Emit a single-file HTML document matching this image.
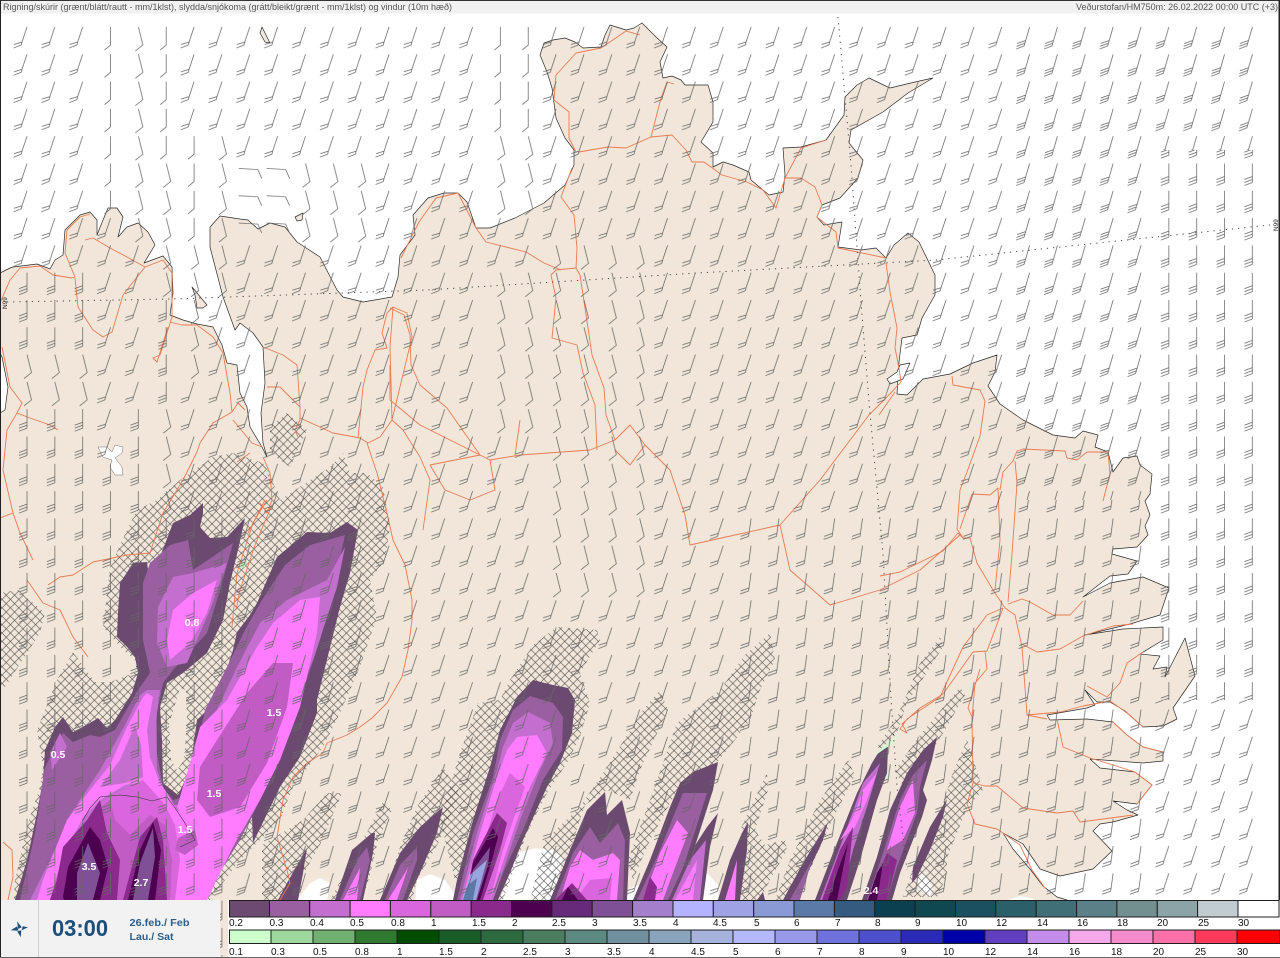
<!DOCTYPE html>
<html lang="is"><head><meta charset="utf-8"><title>Veðurstofan HM750m</title>
<style>html,body{margin:0;padding:0;background:#fff}svg{display:block}text{font-family:"Liberation Sans",sans-serif}</style></head>
<body>
<svg xmlns="http://www.w3.org/2000/svg" width="1280" height="958" viewBox="0 0 1280 958">
<defs>
<pattern id="h" width="8.4" height="8.4" patternUnits="userSpaceOnUse" patternTransform="translate(2 3)"><path d="M-1 -1L9.4 9.4M-1 9.4L9.4 -1" stroke="#444" stroke-width=".6" fill="none"/></pattern>
<pattern id="a" x="13" y="25" width="27.85" height="27.3" patternUnits="userSpaceOnUse"><path d="M14 2L9 17L8.3 20M9 17L1 19.5M8.3 20L.5 23" fill="none" stroke="#666" stroke-width=".75"/></pattern>
<pattern id="a3" x="13" y="25" width="27.85" height="27.3" patternUnits="userSpaceOnUse"><path d="M14 2L8.5 21M10 15.5L1.5 18.5M9.2 18.2L1 21.2M8.5 21L.5 24" fill="none" stroke="#666" stroke-width=".75"/></pattern>
<pattern id="e" x="13" y="25" width="27.85" height="27.3" patternUnits="userSpaceOnUse"><path d="M14 2L11.5 20M11.8 17L3.5 20M11.5 20L3 23" fill="none" stroke="#666" stroke-width=".75"/></pattern>
<pattern id="b" x="13" y="25" width="27.85" height="27.3" patternUnits="userSpaceOnUse"><path d="M14 2V20L8 25" fill="none" stroke="#666" stroke-width=".75"/></pattern>
<pattern id="b3" x="13" y="25" width="27.85" height="27.3" patternUnits="userSpaceOnUse"><path d="M14 2V21M14 15L6 18M14 18L6 21M14 21L6 24" fill="none" stroke="#666" stroke-width=".75"/></pattern>
<pattern id="c" x="13" y="25" width="27.85" height="27.3" patternUnits="userSpaceOnUse"><path d="M14 2L18.5 20L11 26" fill="none" stroke="#666" stroke-width=".75"/></pattern>
<pattern id="d" x="13" y="25" width="27.85" height="27.3" patternUnits="userSpaceOnUse"><path d="M3 7L22 8L26 17" fill="none" stroke="#666" stroke-width=".75"/></pattern>
</defs>

<rect width="1280" height="958" fill="#fff"/>

<!-- land -->
<g fill="#f1e6d9" stroke="#2a2a2a" stroke-width=".7" stroke-linejoin="round">
<path d="M0 273L10 268L13 267L37 264L50 269L55 260L63 255L65 230L80 215L90 212L97 220L97 235L103 220L108 208L117 208L123 217L118 237L127 227L138 223L148 232L155 245L144 263L163 256L172 267L173 293L170 315L183 320L197 324L213 327L222 345L227 363L237 365L240 393L247 407L250 427L262 447L267 457L263 443L261 413L265 383L263 347L253 333L240 323L235 330L223 297L210 247L210 227L220 216L240 219L248 220L258 229L270 223L285 227L297 242L320 257L337 290L343 297L363 302L392 297L398 277L400 255L415 235L413 215L428 198L444 193L458 193L467 202L476 228L490 228L515 218L544 203L565 185L574 165L574 150L565 138L556 118L552 88L547 72L540 55L544 43L553 40L565 38L575 42L583 48L601 47L605 35L610 25L626 30L634 28L642 23L656 37L667 47L660 62L663 78L672 76L681 80L685 85L708 85L713 102L713 122L701 142L713 153L713 167L723 162L733 165L749 172L751 180L769 195L783 192L785 175L783 148L801 147L826 140L844 115L845 97L857 85L869 78L890 88L915 82L933 78L908 93L883 112L851 130L849 143L863 160L858 178L840 198L822 205L817 217L824 225L842 222L838 247L861 250L876 248L886 258L894 245L908 233L919 242L935 275L935 295L922 318L917 335L902 338L899 362L897 394L907 395L923 379L950 374L973 363L997 355L995 372L988 386L1000 404L1023 420L1053 435L1075 438L1083 431L1098 435L1095 447L1108 452L1113 472L1123 458L1137 456L1140 465L1152 474L1150 494L1145 501L1150 515L1145 526L1148 535L1137 547L1113 549L1112 554L1137 561L1128 574L1110 576L1083 597L1110 583L1143 577L1169 588L1160 615L1130 624L1085 635L1123 629L1163 627L1163 640L1140 654L1160 656L1153 669L1167 667L1165 677L1185 638L1195 676L1173 708L1177 719L1163 726L1143 727L1125 711L1110 702L1097 702L1085 690L1095 705L1087 708L1047 715L1050 720L1087 719L1113 722L1127 735L1143 747L1163 752L1163 761L1143 763L1090 759L1100 768L1135 772L1152 785L1137 804L1113 801L1127 810L1138 815L1113 822L1100 824L1093 831L1112 851L1093 869L1060 876L1040 869L1023 844L1003 833L1013 849L1030 869L1043 886L1057 897L1067 900L1067 958L0 958L0 413L5 410L8 387L2 357L0 353Z"/>
<path d="M262 27L270 43L265 42L260 33Z"/>
<path d="M295 217L303 213L302 220L297 221Z"/>
<path d="M192 287L207 305L203 308L197 308L195 295Z"/>
<path d="M887 379L897 372L900 365L910 363L903 379L890 384Z" fill="#fff"/>
<path d="M98 447L107 447L112 452L115 445L123 447L122 453L115 458L122 467L123 475L115 475L110 467L112 460L103 457Z" fill="#fff" stroke="#777" stroke-width=".5"/>
</g>

<!-- white glacier blotches -->
<g fill="#fff">
<path d="M297 900L310 883L320 878L330 883L327 900Z"/>
<path d="M415 900L417 880L430 874L445 880L455 895L458 900Z"/>
<path d="M500 900L517 853L537 848L553 850L563 857L553 900Z"/>
<path d="M690 900L700 875L707 873L720 887L717 900Z"/>
<path d="M625 900L630 888L640 885L645 900Z"/>
<path d="M917 880L923 873L933 887L930 897L920 890Z"/>
<path d="M1008 900L1020 896L1034 899V900Z"/>
</g>

<!-- hatch -->
<g fill="url(#h)">
<path d="M233 453L213 457L180 480L157 500L137 510L127 530L110 567L103 627L123 650L135 660L137 672L110 682L95 682L73 652L57 680L37 730L43 767L40 787L28 823L15 880L14 900L210 900L240 860L280 820L293 787L323 747L340 713L360 667L377 617L370 580L385 560L390 527L383 487L367 473L350 473L343 453L330 467L280 500L268 470L263 463Z"/>
<path d="M0 593L18 590L45 613L40 633L27 653L5 687L0 690Z"/>
<path d="M270 427L287 413L307 430L290 467L270 453Z"/>
<path d="M327 793L342 793L320 845L300 880L290 900L262 900L262 845L303 820Z"/>
<path d="M383 802L392 810L378 840L370 875L362 900L330 900L352 860Z"/>
<path d="M443 767L460 793L440 840L417 880L412 900L383 900L400 847L417 807Z"/>
<path d="M478 703L500 700L510 680L533 645L557 627L597 630L600 640L580 673L590 703L580 737L567 763L547 793L527 833L503 900L460 900L440 820L460 753Z"/>
<path d="M660 690L668 710L640 770L630 800L607 790L585 805L570 850L555 900L530 900L545 840L580 807L603 773L643 710Z"/>
<path d="M770 633L775 660L760 690L750 720L735 740L715 765L680 785L650 840L633 880L628 860L650 800L677 723L720 690L745 655Z"/>
<path d="M767 773L768 790L755 830L765 845L785 840L787 850L770 880L760 900L735 900L748 850L740 830Z"/>
<path d="M848 760L855 775L830 825L810 870L795 900L775 900L790 860L820 800Z"/>
<path d="M940 637L943 647L920 683L907 703L897 733L883 750L877 747L897 717L920 663Z"/>
<path d="M960 687L965 695L945 730L925 762L905 790L895 770L920 735Z"/>
<path d="M967 740L983 790L967 808L947 858L947 876L937 897L903 897L913 868L937 822L953 772Z"/>
</g>
<path d="M180 688L186 690L187 720L184 760L177 770L171 760L169 725Z" fill="#f1e6d9"/>

<!-- precipitation west complex -->
<g stroke="none">
<path fill="#6b4a70" d="M15 900L27 860L37 813L43 780L45 750L55 727L63 717L73 732L90 723L98 718L107 728L115 720L132 693L138 673L135 657L128 648L117 637L118 613L120 583L133 563L147 562L148 570L160 557L173 523L190 515L203 503L203 513L200 527L210 538L227 537L245 518L238 550L230 583L223 620L207 653L183 673L167 683L160 707L162 740L163 783L178 795L190 770L197 720L217 700L233 650L237 632L250 615L257 603L277 557L307 532L330 533L347 522L358 530L350 573L340 607L317 700L317 713L300 757L280 787L253 843L252 817L233 850L220 870L203 897L200 900Z"/>
<path fill="#9a5fa0" d="M20 900L35 833L45 767L63 733L73 742L90 735L100 737L115 730L138 690L150 673L143 640L143 583L150 563L170 545L188 540L193 570L233 543L220 590L207 633L173 670L163 683L157 713L157 753L163 787L173 800L183 797L192 770L205 710L228 665L245 630L262 600L285 565L310 545L345 535L335 580L320 640L300 700L285 745L265 790L240 840L215 880L195 900Z"/>
<path fill="#c46fcf" d="M173 577L193 573L227 563L210 610L187 663L167 667L157 643L158 607Z"/>
<path fill="#c46fcf" d="M237 667L260 623L287 600L327 580L345 547L337 587L313 660L290 713L273 773L247 810L220 860L203 900L30 900L50 860L70 815L100 770L125 725L140 695L147 690L160 690L156 720L157 770L170 805L185 805L195 775L210 725Z"/>
<path fill="#c46fcf" d="M60 733L50 753L52 770L67 747Z"/>
<path fill="#ff7bff" d="M173 610L193 593L217 580L207 613L190 643L170 660L167 640Z"/>
<path fill="#ff7bff" d="M320 597L300 600L273 623L257 647L227 700L200 727L190 763L177 807L193 833L187 883L188 900L207 900L233 847L260 800L280 760L300 707L317 633Z"/>
<path fill="#ff7bff" d="M147 693L153 697L147 730L150 757L160 783L167 793L177 810L197 820L193 850L190 900L172 900L175 850L165 815L143 782L125 785L100 800L85 815L65 850L50 900L37 900L43 880L67 820L90 790L110 765L127 727L143 697Z"/>
<path fill="#c46fcf" d="M135 725L120 760L100 787L125 783L143 777L141 745Z"/>
<path fill="#d966dc" d="M143 780L123 790L105 800L85 825L65 850L52 900L175 900L180 860L175 825L165 805Z"/>
<path fill="#c05cc4" d="M293 663L273 663L247 693L217 740L200 767L197 800L210 817L240 807L267 763L287 707Z"/>
<path fill="#c05cc4" d="M178 838L195 830L198 845L185 855L175 850Z"/>
<path fill="#c05cc4" d="M110 800L97 810L75 835L60 865L50 900L170 900L172 860L165 825L150 815L130 835L115 820Z"/>
<path fill="#8a2a8c" d="M100 800L87 820L63 847L57 880L50 900L117 900L120 860L107 833Z"/>
<path fill="#8a2a8c" d="M157 817L140 837L123 900L167 900L163 840Z"/>
<path fill="#4d004f" d="M90 827L68 867L63 897L64 900L100 900L108 867L100 840Z"/>
<path fill="#4d004f" d="M153 822L140 850L128 900L155 900L161 850Z"/>
<path fill="#805097" d="M88 843L77 873L77 900L93 900L100 873Z"/>
<path fill="#805097" d="M153 828L140 863L133 900L148 900L155 857Z"/>
<path d="M83 820L90 808L100 797L120 795L137 797L152 801L167 797L175 808L183 820L195 840L180 847" fill="none" stroke="#333" stroke-width=".6"/>
</g>

<!-- streaks -->
<g stroke="none">
<path fill="#6b4a70" d="M307 848L287 883L278 900L298 900L303 873Z"/>
<path fill="#6b4a70" d="M372 833L375 833L373 853L363 900L335 900L352 850Z"/>
<path fill="#9a5fa0" d="M367 847L370 860L360 900L340 900L357 860Z"/>
<path fill="#ff7bff" d="M360 868L357 900L343 900Z"/>
<path fill="#6b4a70" d="M443 807L437 833L420 873L407 900L380 900L400 853L420 827Z"/>
<path fill="#9a5fa0" d="M417 847L417 860L403 900L385 900L400 865Z"/>
<path fill="#ff7bff" d="M408 868L397 900L388 900Z"/>

<path fill="#6b4a70" d="M533 680L553 685L568 688L575 700L572 733L560 763L547 787L523 840L510 873L498 900L453 900L457 880L473 820L490 767L500 730L517 697Z"/>
<path fill="#9a5fa0" d="M530 696L553 703L563 717L562 750L543 780L523 830L503 873L493 900L457 900L473 833L493 777L500 740L513 710Z"/>
<path fill="#c46fcf" d="M528 712L550 723L553 743L540 770L520 820L493 900L460 900L477 833L497 770L503 747L513 723Z"/>
<path fill="#ff7bff" d="M517 737L537 735L547 753L530 787L517 820L497 880L490 900L462 900L480 833L497 777L507 750Z"/>
<path fill="#d966dc" d="M510 773L525 787L515 815L503 850L490 900L470 900L482 850L497 800Z"/>
<path fill="#8a2a8c" d="M497 813L507 823L500 850L483 900L465 900L473 860Z"/>
<path fill="#4d004f" d="M493 828L498 837L490 867L480 900L467 900L473 863Z"/>
<path fill="#805097" d="M490 847L488 865L477 900L465 900L473 870Z"/>
<path fill="#9aa5e0" d="M487 860L476 900L462 900L470 875Z"/>
<path fill="#5c7aa8" d="M477 878L473 900L463 900L468 885Z"/>

<path fill="#6b4a70" d="M605 792L607 815L622 800L630 833L627 900L550 900L570 850L587 810Z"/>
<path fill="#9a5fa0" d="M600 843L618 823L625 840L623 900L555 900L573 853L590 827Z"/>
<path fill="#ff7bff" d="M580 850L593 860L613 853L620 860L617 900L560 900L570 867Z"/>
<path fill="#d966dc" d="M590 880L612 878L610 900L575 900Z"/>
<path fill="#8a2a8c" d="M572 883L587 900L555 900Z"/>
<path fill="#4d004f" d="M568 887L578 900L562 900Z"/>

<path fill="#6b4a70" d="M693 772L718 762L713 790L697 840L690 860L677 900L633 900L650 860L670 807L680 783Z"/>
<path fill="#9a5fa0" d="M683 793L707 793L693 837L673 900L637 900L657 857Z"/>
<path fill="#ff7bff" d="M677 820L688 833L673 873L663 900L643 900L660 853Z"/>
<path fill="#8a2a8c" d="M650 877L657 887L655 900L643 900Z"/>
<path fill="#6b4a70" d="M718 813L710 847L703 900L668 900L690 853L707 827Z"/>
<path fill="#c46fcf" d="M706 840L700 900L672 900L690 860Z"/>
<path fill="#ff7bff" d="M697 860L693 900L675 900Z"/>
<path fill="#6b4a70" d="M748 822L747 850L740 900L718 900L730 860L742 833Z"/>
<path fill="#ff7bff" d="M737 860L735 900L725 900Z"/>
<path fill="#6b4a70" d="M763 892L765 900L757 900Z"/>
<path fill="#6b4a70" d="M828 822L823 840L803 883L797 900L783 900L803 863Z"/>
<path fill="#9a5fa0" d="M812 860L800 900L790 900Z"/>

<path fill="#6b4a70" d="M888 747L887 773L877 800L860 860L847 900L815 900L833 853L857 793L872 763L880 750Z"/>
<path fill="#c46fcf" d="M880 763L867 807L853 850L840 900L820 900L840 847L863 783Z"/>
<path fill="#ff7bff" d="M877 773L867 800L855 827L840 840L853 817L863 790Z"/>
<path fill="#8a2a8c" d="M853 827L847 887L840 900L822 900L840 850Z"/>
<path fill="#4d004f" d="M848 843L837 900L828 900L838 870Z"/>

<path fill="#6b4a70" d="M937 737L932 760L923 790L927 800L922 817L900 873L892 900L862 900L877 857L890 810L907 773L923 750Z"/>
<path fill="#9a5fa0" d="M927 760L920 787L917 813L897 867L887 900L867 900L883 853L900 800L913 775Z"/>
<path fill="#ff7bff" d="M913 780L915 813L903 840L887 850L900 807Z"/>
<path fill="#8a2a8c" d="M887 853L897 860L887 900L868 900L880 870Z"/>
<path fill="#4d004f" d="M883 863L877 900L868 900L877 873Z"/>
<path fill="#6b4a70" d="M947 799L943 817L930 850L917 877L912 883L913 867L930 827Z"/>
<path fill="#ccffcc" d="M900 732L893 743L873 757L884 746L895 738Z"/>
<path fill="#ccffcc" d="M889 770L888 781L885 778Z"/>
<path fill="#b8f0b8" d="M241 563L247 561L245 567L240 568Z"/>
</g>
<path d="M267 467L268 487" stroke="#b6f5a5" stroke-width="1" fill="none"/>

<!-- roads -->
<g fill="none" stroke="#ea7a50" stroke-width=".9" stroke-linejoin="round">
<path d="M579 152L608 147L626 148L651 137L672 135L686 150L692 162L704 162L722 175L747 182L763 190L776 208L785 178L801 178L815 187L822 205L817 217L836 232L838 248L886 258"/>
<path d="M651 137L661 98L667 82L674 84"/>
<path d="M576 152L569 138L569 112L554 100L556 75L576 53L601 48L626 31L640 35"/>
<path d="M785 178L801 148L826 140"/>
<path d="M572 168L561 197L574 215L577 248L576 268L556 270L551 275L556 298L552 338L577 345L583 373L595 405L597 450"/>
<path d="M576 268L580 275L585 308L592 355L604 388L606 415L615 440"/>
<path d="M476 228L486 242L526 252L544 263L561 270"/>
<path d="M401 258L419 222L436 198L458 193L476 228"/>
<path d="M390 308L404 315L410 335L411 365L420 385L447 408L480 455"/>
<path d="M886 263L890 292L897 328L895 348L899 368L901 382L886 398L869 415L820 480L780 525"/>
<path d="M895 392L879 415"/>
<path d="M390 365L390 400L420 425L480 455L490 460L520 455L590 450L615 440L630 425L645 445L630 465L615 450"/>
<path d="M490 460L495 490L470 500L445 490L430 465L480 455"/>
<path d="M520 420L515 455"/>
<path d="M645 445L670 470L685 515L690 545L735 535L780 525L790 570L830 605L880 590L920 570L960 535"/>
<path d="M880 576L900 572L943 551L958 533L963 538L970 538L977 563L993 590L1005 608"/>
<path d="M952 376L953 385L980 390L985 401L980 436L967 472L960 490L957 529L963 538"/>
<path d="M972 494L960 529M972 494L990 495L998 488L1000 540L995 590"/>
<path d="M1013 461L1003 472L1000 490M1013 461L1017 451L1023 449L1065 451L1067 458L1077 460L1087 452L1108 452L1110 474L1103 501"/>
<path d="M1015 461L1017 483L1012 554L1008 602"/>
<path d="M1008 604L1022 599L1030 602L1053 615L1070 615L1083 601"/>
<path d="M1005 608L1015 615L1022 647L1027 715L1047 719"/>
<path d="M1022 644L1037 652L1060 649L1083 636L1113 626L1133 624"/>
<path d="M1003 608L987 615L963 647L940 697L907 719L900 729L907 733L902 724L920 708L943 694L973 652L987 651L1003 608"/>
<path d="M985 651L987 669L975 683L972 719L973 783L985 786L997 786L1023 808L1057 813L1073 811L1080 822L1103 819L1133 815"/>
<path d="M973 783L967 804L975 824L997 829L1003 833L1020 845L1032 870L1045 888"/>
<path d="M980 669L968 708L973 719"/>
<path d="M1057 719L1063 747L1090 758L1113 765L1135 772"/>
<path d="M1027 715L1060 712L1083 706L1110 701L1127 713L1143 727"/>
<path d="M1087 686L1107 697L1120 683L1127 663L1143 652"/>
<path d="M1113 722L1127 735L1143 747L1163 752"/>
<path d="M1135 772L1152 785L1137 804"/>
<path d="M0 303L10 280L20 268L40 266L53 275L72 278L75 277L65 253L67 230L80 217L90 214"/>
<path d="M75 278L78 307L93 330L103 337L112 332L123 295L145 267L127 257L110 248L93 238L85 240"/>
<path d="M145 267L163 260L172 273L172 317L160 355L153 358L157 362L168 327"/>
<path d="M170 322L182 325L197 325L213 337L223 353L230 393L232 412L238 403L245 410"/>
<path d="M232 412L213 423L200 443L197 452L183 480L163 513L150 553L127 555L93 562L73 575L60 577L48 585"/>
<path d="M233 420L247 437L252 443L262 447"/>
<path d="M2 347L10 387L22 403L17 413L7 430L3 470L13 513L0 518M13 513L20 533L33 560"/>
<path d="M17 413L30 418L50 425L58 430"/>
<path d="M27 580L43 603L60 610L73 637L88 657"/>
<path d="M3 842L12 850L13 877L8 900"/>
<path d="M263 347L283 355L297 365L300 407L300 420L295 430L298 437"/>
<path d="M267 387L280 387L293 400L300 407"/>
<path d="M300 418L333 433L360 438L368 443L380 437L392 420L390 347L393 307L387 313L382 333L387 348L375 350L367 370L363 387L358 438"/>
<path d="M393 307L407 313L412 337L392 420L403 430L420 457L430 480L423 530"/>
<path d="M367 443L377 473L387 513L393 540L405 565L412 600L412 620L408 650L402 677L387 703L372 718L360 727L347 735L327 743L323 753L307 763L293 777L283 800L277 837L287 870L290 883L280 900"/>
<path d="M263 457L270 473L272 500L267 513L260 503M265 500L248 533"/>
<path d="M267 500L253 523L237 573L232 627M272 505L255 545L240 590L236 610"/>
<path d="M237 462L250 453"/>
<path d="M830 605L835 603"/>
</g>

<!-- dotted grid -->
<g fill="none" stroke="#444" stroke-width="1" stroke-dasharray="1.2 5">
<path d="M7 302L172 299L427 290L697 273L936 260L1270 225"/>
<path d="M838 17L851 165L861 302L869 402L883 554L890 683L897 787L907 870"/>
</g>

<!-- barbs -->
<g>
<rect x="13" y="25" width="84" height="246" fill="url(#a)"/>
<rect x="13" y="271" width="84" height="82" fill="url(#b3)"/>
<rect x="13" y="353" width="84" height="54" fill="url(#c)"/>
<rect x="13" y="407" width="84" height="492" fill="url(#b3)"/>
<rect x="97" y="25" width="27" height="191" fill="url(#b)"/>
<rect x="97" y="216" width="27" height="246" fill="url(#a)"/>
<rect x="97" y="462" width="27" height="437" fill="url(#b3)"/>
<rect x="124" y="25" width="28" height="218" fill="url(#c)"/>
<rect x="124" y="243" width="28" height="164" fill="url(#a)"/>
<rect x="124" y="407" width="28" height="492" fill="url(#b3)"/>
<rect x="152" y="25" width="28" height="137" fill="url(#b)"/>
<rect x="152" y="162" width="28" height="136" fill="url(#c)"/>
<rect x="152" y="298" width="28" height="109" fill="url(#b3)"/>
<rect x="152" y="407" width="28" height="109" fill="url(#c)"/>
<rect x="152" y="516" width="28" height="383" fill="url(#b3)"/>
<rect x="180" y="25" width="28" height="110" fill="url(#a)"/>
<rect x="180" y="135" width="28" height="108" fill="url(#b)"/>
<rect x="180" y="243" width="28" height="137" fill="url(#c)"/>
<rect x="180" y="380" width="28" height="136" fill="url(#a)"/>
<rect x="180" y="516" width="28" height="383" fill="url(#b3)"/>
<rect x="208" y="25" width="28" height="110" fill="url(#a)"/>
<rect x="208" y="135" width="28" height="163" fill="url(#c)"/>
<rect x="208" y="298" width="28" height="218" fill="url(#a)"/>
<rect x="208" y="516" width="28" height="442" fill="url(#b3)"/>
<rect x="236" y="25" width="56" height="137" fill="url(#a)"/>
<rect x="236" y="162" width="56" height="81" fill="url(#d)"/>
<rect x="236" y="243" width="56" height="273" fill="url(#a)"/>
<rect x="236" y="516" width="56" height="383" fill="url(#a3)"/>
<rect x="292" y="25" width="83" height="137" fill="url(#a)"/>
<rect x="292" y="162" width="83" height="81" fill="url(#c)"/>
<rect x="292" y="243" width="83" height="273" fill="url(#a)"/>
<rect x="292" y="516" width="83" height="383" fill="url(#a3)"/>
<rect x="375" y="25" width="111" height="874" fill="url(#a)"/>
<rect x="486" y="25" width="56" height="110" fill="url(#b)"/>
<rect x="486" y="135" width="56" height="81" fill="url(#c)"/>
<rect x="486" y="216" width="56" height="55" fill="url(#a)"/>
<rect x="486" y="271" width="56" height="164" fill="url(#c)"/>
<rect x="486" y="435" width="56" height="464" fill="url(#a)"/>
<rect x="542" y="25" width="112" height="218" fill="url(#a)"/>
<rect x="542" y="243" width="112" height="355" fill="url(#c)"/>
<rect x="542" y="598" width="112" height="301" fill="url(#a)"/>
<rect x="654" y="25" width="83" height="874" fill="url(#a)"/>
<rect x="737" y="25" width="279" height="491" fill="url(#a)"/>
<rect x="737" y="516" width="279" height="383" fill="url(#e)"/>
<rect x="1016" y="25" width="139" height="475" fill="url(#a3)"/>
<rect x="1016" y="500" width="139" height="399" fill="url(#e)"/>
<rect x="1155" y="25" width="111" height="125" fill="url(#a3)"/>
<rect x="1155" y="150" width="111" height="550" fill="url(#b3)"/>
<rect x="1155" y="700" width="111" height="199" fill="url(#a)"/>
</g>

<!-- value labels -->
<g fill="#fff" font-size="10.5" font-weight="bold" text-anchor="middle">
<text x="192" y="626">0.8</text>
<text x="58" y="758">0.5</text>
<text x="274" y="716">1.5</text>
<text x="214" y="797">1.5</text>
<text x="185" y="833">1.5</text>
<text x="89" y="870">3.5</text>
<text x="141" y="886">2.7</text>
<text x="871" y="894">2.4</text>
</g>
<g fill="#222" font-size="6.5">
<text transform="translate(7 309) rotate(-90)">N99</text>
<text transform="translate(1278 231) rotate(-90)">N99</text>
</g>

<!-- header -->
<rect x="0" y="0" width="1280" height="13.5" fill="#f1f1f1"/>
<rect x="0" y="0" width="1280" height="1" fill="#333"/>
<text x="3" y="10" font-size="9.3" fill="#555" textLength="449" lengthAdjust="spacingAndGlyphs">Rigning/skúrir (grænt/blátt/rautt - mm/1klst), slydda/snjókoma (grátt/bleikt/grænt - mm/1klst) og vindur (10m hæð)</text>
<text x="1076" y="10" font-size="9.3" fill="#555" textLength="202" lengthAdjust="spacingAndGlyphs">Veðurstofan/HM750m: 26.02.2022 00:00 UTC (+3)</text>
<rect x="0" y="0" width="1" height="958" fill="#222"/>
<rect x="1278.5" y="0" width="1.5" height="900" fill="#222"/>

<!-- panel -->
<rect x="1" y="900" width="219" height="58" fill="#f2f2f2"/>
<rect x="38" y="900" width="1" height="58" fill="#dcc8dc"/>
<g fill="#1c4f7c">
<path d="M17 921.3L21.7 927.3L18.3 929Z"/>
<path d="M28 927.3L22.7 926.3L21.7 930.3Z"/>
<path d="M20.7 937.3L17.3 931.3L21.3 930.3Z"/>
<path d="M10.7 930.3L17.3 926.3L18.3 930.7Z"/>
</g>
<text x="52" y="936" font-size="23" font-weight="bold" fill="#1c4f7c" textLength="56" lengthAdjust="spacingAndGlyphs">03:00</text>
<text x="129.5" y="926" font-size="10.5" fill="#2a5f8c" font-weight="bold" textLength="60" lengthAdjust="spacingAndGlyphs">26.feb./ Feb</text>
<text x="129.5" y="940" font-size="10.5" fill="#2a5f8c" font-weight="bold" textLength="44" lengthAdjust="spacingAndGlyphs">Lau./ Sat</text>

<!-- legend -->
<rect x="228" y="900" width="1052" height="58" fill="#fff"/>
<g stroke="#1f1f1f" stroke-width="1">
<rect x="229.5" y="900.5" width="40" height="16.5" fill="#6d4a70"/>
<rect x="269.5" y="900.5" width="40" height="16.5" fill="#9a5fa0"/>
<rect x="309.7" y="900.5" width="40.4" height="16.5" fill="#c46fcf"/>
<rect x="350.1" y="900.5" width="40.3" height="16.5" fill="#ff7bff"/>
<rect x="390.4" y="900.5" width="40.4" height="16.5" fill="#d966dc"/>
<rect x="430.8" y="900.5" width="40.4" height="16.5" fill="#c05cc4"/>
<rect x="471.2" y="900.5" width="40.3" height="16.5" fill="#8a2a8c"/>
<rect x="511.5" y="900.5" width="40.4" height="16.5" fill="#4d004f"/>
<rect x="551.9" y="900.5" width="40.3" height="16.5" fill="#672a7a"/>
<rect x="592.2" y="900.5" width="40.4" height="16.5" fill="#805097"/>
<rect x="632.6" y="900.5" width="40.4" height="16.5" fill="#a37fcc"/>
<rect x="673" y="900.5" width="40.3" height="16.5" fill="#b3b3ff"/>
<rect x="713.3" y="900.5" width="40.4" height="16.5" fill="#9fa3e5"/>
<rect x="753.7" y="900.5" width="40.3" height="16.5" fill="#8a9ad6"/>
<rect x="794" y="900.5" width="40.4" height="16.5" fill="#5c7aa8"/>
<rect x="834.4" y="900.5" width="40.4" height="16.5" fill="#335c80"/>
<rect x="874.8" y="900.5" width="40.3" height="16.5" fill="#0a4050"/>
<rect x="915.1" y="900.5" width="40.4" height="16.5" fill="#104850"/>
<rect x="955.5" y="900.5" width="40.3" height="16.5" fill="#1a5060"/>
<rect x="995.8" y="900.5" width="40.4" height="16.5" fill="#2c6068"/>
<rect x="1036.2" y="900.5" width="40.4" height="16.5" fill="#406f78"/>
<rect x="1076.6" y="900.5" width="40.3" height="16.5" fill="#5b8088"/>
<rect x="1116.9" y="900.5" width="40.4" height="16.5" fill="#729090"/>
<rect x="1157.3" y="900.5" width="40.3" height="16.5" fill="#8ca4a8"/>
<rect x="1197.6" y="900.5" width="40.4" height="16.5" fill="#c0ccd0"/>
<rect x="1238" y="900.5" width="41" height="16.5" fill="#fff"/>
<rect x="229.5" y="930" width="41.5" height="13.5" fill="#ccffcc"/>
<rect x="271" y="930" width="42" height="13.5" fill="#9fd89f"/>
<rect x="313" y="930" width="42" height="13.5" fill="#70b070"/>
<rect x="355" y="930" width="42" height="13.5" fill="#2f7a2f"/>
<rect x="397" y="930" width="42" height="13.5" fill="#004d00"/>
<rect x="439" y="930" width="42" height="13.5" fill="#1a5c28"/>
<rect x="481" y="930" width="42" height="13.5" fill="#2d6a40"/>
<rect x="523" y="930" width="42" height="13.5" fill="#4a7c60"/>
<rect x="565" y="930" width="42" height="13.5" fill="#5c8a80"/>
<rect x="607" y="930" width="42" height="13.5" fill="#7090a0"/>
<rect x="649" y="930" width="42" height="13.5" fill="#8aa4bc"/>
<rect x="691" y="930" width="42" height="13.5" fill="#a5b2dc"/>
<rect x="733" y="930" width="42" height="13.5" fill="#b3b8ff"/>
<rect x="775" y="930" width="42" height="13.5" fill="#9999ea"/>
<rect x="817" y="930" width="42" height="13.5" fill="#6f72dc"/>
<rect x="859" y="930" width="42" height="13.5" fill="#4d50cc"/>
<rect x="901" y="930" width="42" height="13.5" fill="#2a2ab8"/>
<rect x="943" y="930" width="42" height="13.5" fill="#0000aa"/>
<rect x="985" y="930" width="42" height="13.5" fill="#6040c0"/>
<rect x="1027" y="930" width="42" height="13.5" fill="#c48cea"/>
<rect x="1069" y="930" width="42" height="13.5" fill="#f5a8ea"/>
<rect x="1111" y="930" width="42" height="13.5" fill="#f48ccc"/>
<rect x="1153" y="930" width="42" height="13.5" fill="#ff70a8"/>
<rect x="1195" y="930" width="42" height="13.5" fill="#ff3a5a"/>
<rect x="1237" y="930" width="43" height="13.5" fill="#ff0000"/>
</g>
<g font-size="10" fill="#111">
<text x="229" y="926">0.2</text><text x="269.5" y="926">0.3</text><text x="310" y="926">0.4</text><text x="350" y="926">0.5</text><text x="391" y="926">0.8</text><text x="431" y="926">1</text><text x="472" y="926">1.5</text><text x="512" y="926">2</text><text x="552" y="926">2.5</text><text x="592" y="926">3</text><text x="633" y="926">3.5</text><text x="673" y="926">4</text><text x="713" y="926">4.5</text><text x="754" y="926">5</text><text x="794" y="926">6</text><text x="835" y="926">7</text><text x="875" y="926">8</text><text x="915" y="926">9</text><text x="956" y="926">10</text><text x="996" y="926">12</text><text x="1037" y="926">14</text><text x="1077" y="926">16</text><text x="1117" y="926">18</text><text x="1157" y="926">20</text><text x="1198" y="926">25</text><text x="1238" y="926">30</text>
<text x="229" y="955">0.1</text><text x="271" y="955">0.3</text><text x="313" y="955">0.5</text><text x="355" y="955">0.8</text><text x="397" y="955">1</text><text x="439" y="955">1.5</text><text x="481" y="955">2</text><text x="523" y="955">2.5</text><text x="565" y="955">3</text><text x="607" y="955">3.5</text><text x="649" y="955">4</text><text x="691" y="955">4.5</text><text x="733" y="955">5</text><text x="775" y="955">6</text><text x="817" y="955">7</text><text x="859" y="955">8</text><text x="901" y="955">9</text><text x="943" y="955">10</text><text x="985" y="955">12</text><text x="1027" y="955">14</text><text x="1069" y="955">16</text><text x="1111" y="955">18</text><text x="1153" y="955">20</text><text x="1195" y="955">25</text><text x="1237" y="955">30</text>
</g>
<rect x="0" y="957" width="1280" height="1" fill="#666"/>
</svg>
</body></html>
